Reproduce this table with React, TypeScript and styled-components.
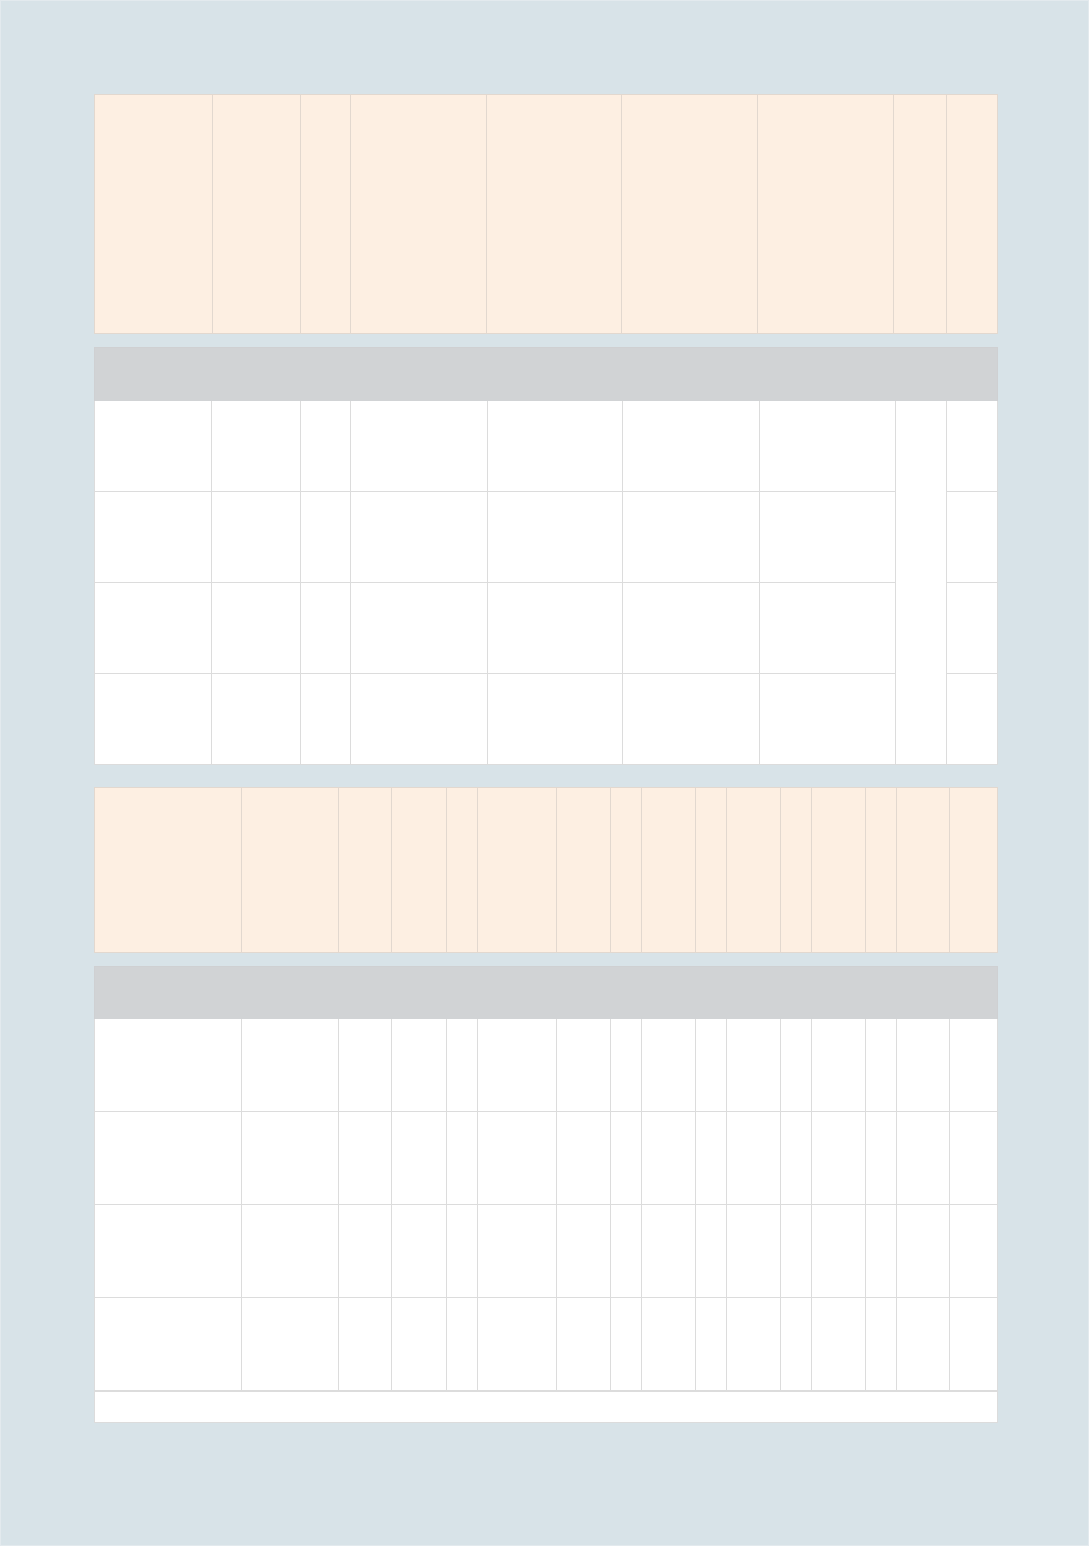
import styled, { createGlobalStyle } from "styled-components";

const GlobalStyle = createGlobalStyle`
  * { box-sizing: border-box; }
  html, body {
    margin: 0;
    padding: 0;
    background: #d8e3e8;
    font-family: "Liberation Sans", Arial, sans-serif;
  }
`;

const colors = {
  page: "#d8e3e8",
  pageEdge: "#e3eaee",
  peach: "#fdefe2",
  peachLine: "#e2d8cf",
  band: "#d1d3d5",
  bodyLine: "#dcdcdc",
  white: "#ffffff",
};

// column widths (px) read from the form
const topHeadCols = [118, 88, 50, 136, 135, 136, 136, 53, 51];
const topBodyCols = [117, 89, 50, 137, 135, 137, 136, 51, 51];
const bottomCols = [147, 97, 53, 55, 31, 79, 54, 31, 54, 31, 54, 31, 54, 31, 53, 48];

const Page = styled.div`
  width: 1089px;
  height: 1546px;
  background: ${colors.page};
  border: 1px solid ${colors.pageEdge};
  padding: 93px 0 0 93px;
  display: flex;
  flex-direction: column;
`;

const Sheet = styled.div`
  width: 904px;
  display: flex;
  flex-direction: column;
`;

const Grid = styled.div<{ $cols: number[]; $rows: string }>`
  display: grid;
  grid-template-columns: ${(p) => p.$cols.map((c) => `${c}px`).join(" ")};
  grid-template-rows: ${(p) => p.$rows};
`;

const HeadGrid = styled(Grid)`
  background: ${colors.peach};
  border: 1px solid ${colors.peachLine};
`;

const HeadCell = styled.div<{ $last?: boolean }>`
  border-right: ${(p) => (p.$last ? "none" : `1px solid ${colors.peachLine}`)};
`;

const Band = styled.div<{ $height: number; $top: number }>`
  height: ${(p) => p.$height}px;
  margin-top: ${(p) => p.$top}px;
  background: ${colors.band};
  border: 1px solid #cfd0d2;
  border-bottom: none;
`;

const BodyGrid = styled(Grid)`
  background: ${colors.white};
  border: 1px solid ${colors.bodyLine};
  border-top: none;
`;

const BodyCell = styled.div<{ $last?: boolean; $bottom?: boolean }>`
  border-right: ${(p) => (p.$last ? "none" : `1px solid ${colors.bodyLine}`)};
  border-bottom: ${(p) => (p.$bottom ? "none" : `1px solid ${colors.bodyLine}`)};
`;

const SpanCell = styled.div<{ $col: number; $rows: number }>`
  grid-column: ${(p) => p.$col};
  grid-row: 1 / span ${(p) => p.$rows};
  border-right: 1px solid ${colors.bodyLine};
`;

const Footer = styled.div`
  height: 31px;
  background: ${colors.white};
  border: 1px solid ${colors.bodyLine};
  border-top: none;
`;

const Spacer = styled.div<{ $h: number }>`
  height: ${(p) => p.$h}px;
`;

const TopTable = () => {
  const rows = 4;
  const mergedCol = 8;
  const cells: JSX.Element[] = [];
  for (let r = 0; r < rows; r++) {
    topBodyCols.forEach((_, c) => {
      if (c + 1 === mergedCol) return;
      cells.push(
        <BodyCell
          key={`${r}-${c}`}
          $last={c === topBodyCols.length - 1}
          $bottom={r === rows - 1}
          style={{ gridColumn: c + 1, gridRow: r + 1 }}
        />
      );
    });
  }
  return (
    <>
      <HeadGrid $cols={topHeadCols} $rows="238px">
        {topHeadCols.map((_, i) => (
          <HeadCell key={i} $last={i === topHeadCols.length - 1} />
        ))}
      </HeadGrid>
      <Band $height={54} $top={13} />
      <BodyGrid $cols={topBodyCols} $rows="91px 91px 91px 90px">
        <SpanCell $col={mergedCol} $rows={rows} />
        {cells}
      </BodyGrid>
    </>
  );
};

const BottomTable = () => {
  const rows = 4;
  return (
    <>
      <HeadGrid $cols={bottomCols} $rows="164px">
        {bottomCols.map((_, i) => (
          <HeadCell key={i} $last={i === bottomCols.length - 1} />
        ))}
      </HeadGrid>
      <Band $height={53} $top={13} />
      <BodyGrid $cols={bottomCols} $rows="repeat(4, 93px)">
        {Array.from({ length: rows }).flatMap((_, r) =>
          bottomCols.map((_, c) => (
            <BodyCell key={`${r}-${c}`} $last={c === bottomCols.length - 1} />
          ))
        )}
      </BodyGrid>
      <Footer />
    </>
  );
};

export default function App() {
  return (
    <>
      <GlobalStyle />
      <Page>
        <Sheet>
          <TopTable />
          <Spacer $h={22} />
          <BottomTable />
        </Sheet>
      </Page>
    </>
  );
}
